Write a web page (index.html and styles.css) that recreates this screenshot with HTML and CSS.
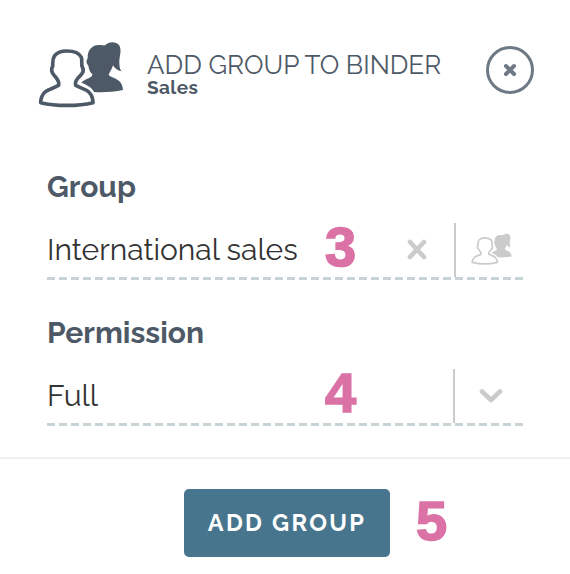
FILE: index.html
```
<!DOCTYPE html>
<html lang="en">
<head>
    <meta charset="UTF-8">
    <meta name="viewport" content="width=device-width, initial-scale=1.0">
    <title>Add group to binder</title>
    <link rel="stylesheet" href="styles.css">
</head>
<body>

    <svg class="sprite" aria-hidden="true">
        <symbol id="icon-group" viewBox="24 33 258 201">
            <path fill="currentColor" d="M154 158C168 144 186 146 187 133C179 126 177 118 175 107C168 101 168 91 173 85C172 59 187 45 207 45C215 45 220 47 226 46C234 35 257 33 267 45C277 60 267 82 268 98C268 110 270 119 275 124C263 122 253 115 249 106C246 118 239 126 236 134C243 145 278 143 279 180C250 186 218 188 192 186C184 171 172 165 154 158Z"/>
            <path class="outline" d="M110 63C130 63 147 67 154 82C157 91 154 98 156 109C164 122 158 129 151 137C142 145 133 156 137 166C154 178 188 176 189 218C145 229 76 229 32 218C33 176 69 178 86 166C89 155 81 146 74 138C67 131 60 122 68 109C69 98 66 88 74 77C82 67 96 63 110 63Z"/>
        </symbol>
    </svg>

    <div class="dialog">
        <div class="header">
            <svg class="header-icon"><use href="#icon-group"/></svg>
            <div class="titles">
                <h1>ADD GROUP TO BINDER</h1>
                <h2>Sales</h2>
            </div>
            <button class="close" aria-label="Close">
                <svg viewBox="0 0 14 14"><path d="M3 3l8 8M11 3l-8 8"/></svg>
            </button>
        </div>

        <div class="content">
            <div class="field">
                <label>Group</label>
                <div class="row">
                    <span class="value">International sales</span>
                    <span class="step">3</span>
                    <svg class="clear" viewBox="0 0 20 22"><path d="M3 3l14 15M17 3L3 18"/></svg>
                    <span class="picker"><svg class="picker-icon"><use href="#icon-group"/></svg></span>
                </div>
            </div>

            <div class="field">
                <label>Permission</label>
                <div class="row">
                    <span class="value">Full</span>
                    <span class="step">4</span>
                    <span class="picker arrow"><svg viewBox="0 0 24 16"><path d="M3 3.5l9 8.5 9-8.5"/></svg></span>
                </div>
            </div>
        </div>

        <div class="footer">
            <button class="btn">ADD GROUP</button>
            <span class="step">5</span>
        </div>
    </div>

</body>
</html>
```
FILE: styles.css
```
body {
    margin: 0;
    background: #fff;
    font-family: Raleway, Lato, sans-serif;
    color: #4e5967;
}

.sprite {
    display: block;
    width: 0;
    height: 0;
}

.outline {
    fill: none;
    stroke: currentColor;
    stroke-width: 11;
    stroke-linejoin: round;
}

.dialog {
    width: 570px;
    height: 574px;
    overflow: hidden;
}

/* Header */
.header {
    display: flex;
    align-items: flex-start;
    box-sizing: border-box;
    height: 168px;
    padding: 41px 36px 0 38px;
}

.header-icon {
    width: 86px;
    height: 67px;
}

.titles {
    flex: 1;
    padding: 11px 0 0 23px;
    white-space: nowrap;
}

h1 {
    margin: 0;
    font-size: 26px;
    font-weight: 400;
    line-height: 26px;
}

h2 {
    margin: 0;
    font-size: 19px;
    font-weight: 700;
    line-height: 18px;
    letter-spacing: 0.4px;
}

.close {
    display: flex;
    align-items: center;
    justify-content: center;
    box-sizing: border-box;
    width: 48px;
    height: 48px;
    margin-top: 5px;
    padding: 0;
    border: 3px solid #6f7986;
    border-radius: 50%;
    background: none;
    color: #6f7986;
}

.close svg {
    width: 14px;
    height: 14px;
}

.close path,
.clear path,
.arrow path {
    fill: none;
    stroke: currentColor;
    stroke-width: 4;
    stroke-linecap: round;
    stroke-linejoin: round;
}

.clear path,
.arrow path {
    stroke-width: 4.6;
}

/* Fields */
.content {
    padding: 0 47px;
}

.field {
    height: 146px;
}

.field label {
    display: block;
    height: 55px;
    font-size: 30px;
    font-weight: 700;
    line-height: 38px;
}

.row {
    display: flex;
    align-items: center;
    height: 54px;
    padding-bottom: 3px;
    background: repeating-linear-gradient(90deg, #c8d3d8 0 8px, transparent 8px 12px) bottom / 100% 3px no-repeat;
}

.value {
    width: 278px;
    padding-bottom: 2px;
    color: #333;
    font-size: 30px;
    font-weight: 400;
    white-space: nowrap;
}

.step {
    padding-bottom: 5px;
    color: #db72a5;
    font-family: "Liberation Sans", Arial, sans-serif;
    font-size: 56px;
    font-weight: 700;
    line-height: 54px;
    -webkit-text-stroke: 1.6px #db72a5;
}

.row .step {
    padding-bottom: 7px;
}

.clear {
    width: 20px;
    height: 22px;
    margin-left: auto;
    margin-right: 27px;
    color: #cbcbcb;
}

.picker {
    display: flex;
    align-items: center;
    box-sizing: border-box;
    width: 69px;
    height: 54px;
    padding-left: 15px;
    border-left: 2px solid #cbcbcb;
    color: #cbcbcb;
}

.picker-icon {
    width: 41px;
    height: 32px;
    margin-bottom: 2px;
}

.arrow {
    width: 70px;
    margin-left: auto;
    padding-left: 24px;
}

.arrow svg {
    width: 24px;
    height: 16px;
}

/* Footer */
.footer {
    display: flex;
    align-items: center;
    box-sizing: border-box;
    height: 114px;
    margin-top: -3px;
    padding: 16px 0 0 184px;
    border-top: 2px solid #efefef;
}

.btn {
    width: 206px;
    height: 68px;
    margin-right: 26px;
    padding: 0 0 2px;
    border: none;
    border-radius: 5px;
    background: #47758e;
    color: #fff;
    font-family: inherit;
    font-size: 23.5px;
    font-weight: 700;
    letter-spacing: 2.3px;
}
```
